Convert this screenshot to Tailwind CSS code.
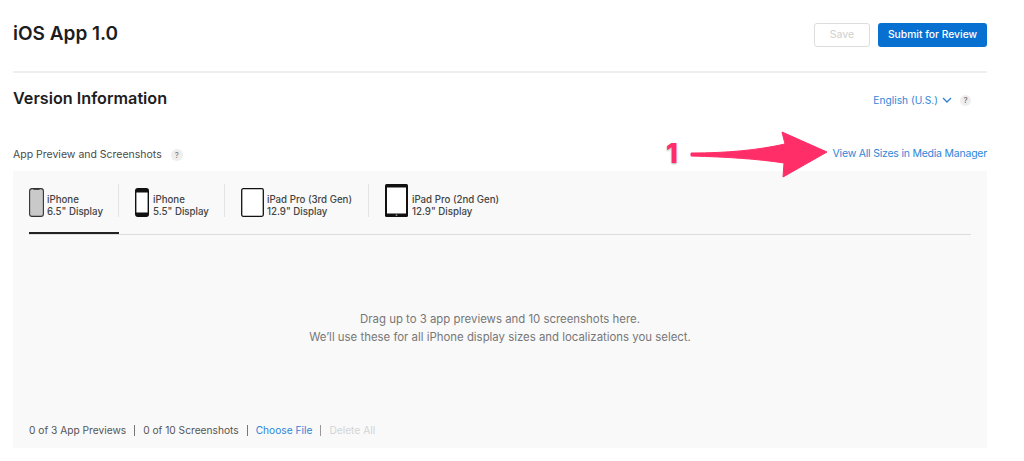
<!DOCTYPE html>
<html><head><meta charset="utf-8"><script src="https://cdn.jsdelivr.net/npm/@tailwindcss/browser@4"></script></head>
<body class="bg-white overflow-hidden font-['Inter','Liberation_Sans',sans-serif] text-[#333]">
<div class="relative w-[1024px] h-[461px] overflow-hidden pl-[13px] pr-[37px]">
  <header class="h-[73px] border-b-2 border-[#eeeeee] flex justify-between items-start">
    <h1 class="mt-[21px] text-[19px] leading-[26px] font-semibold text-[#1d1d1f]">iOS App 1.0</h1>
    <div class="mt-[23px] flex gap-2">
      <button class="w-[56px] h-[24px] rounded-[3px] border border-[#dddddd] text-[10.5px] text-[#cfcfcf] bg-white">Save</button>
      <button class="w-[109px] h-[24px] rounded-[3px] bg-[#0870d1] text-[10.3px] font-medium text-white">Submit for Review</button>
    </div>
  </header>
  <section class="h-[56px] flex justify-between items-start">
    <h2 class="mt-[15px] text-[16.2px] leading-[20px] font-semibold text-[#1d1d1f]">Version Information</h2>
    <div class="mt-[19px] mr-[16px] flex items-center text-[10.2px] leading-[14px] text-[#2f86d8]">
      <span class="mt-[1px]">English (U.S.)</span>
      <svg class="ml-[4px] mt-[1px]" width="10" height="7" viewBox="0 0 10 7" fill="none" stroke="#2f7fd0" stroke-width="1.3"><path d="M1 1l4 4 4-4"/></svg>
      <span class="ml-[8px] w-[11px] h-[11px] mt-[1px] rounded-full bg-[#eeeeee] text-[#777] text-[8px] leading-[11px] text-center font-medium">?</span>
    </div>
  </section>
  <div class="h-[42px] flex justify-between items-start">
    <div class="mt-[19px] flex items-center text-[10.5px] leading-[14px] text-[#4a4a4a]">
      <span>App Preview and Screenshots</span>
      <span class="ml-[9px] w-[12px] h-[12px] rounded-full bg-[#eeeeee] text-[#777] text-[8px] leading-[12px] text-center">?</span>
    </div>
    <a class="mt-[18px] text-[10.5px] tracking-[-0.22px] leading-[14px] text-[#2f86d8]">View All Sizes in Media Manager</a>
  </div>
  <main class="h-[277px] bg-[#f9f9f9] px-[16px] flex flex-col">
    <nav class="h-[64px] border-b border-[#dddddd] flex items-start shrink-0">
      <div class="w-[90px] h-[63px] -mr-px border-b-2 border-[#222] flex items-start pt-[17px] shrink-0">
        <svg width="15" height="29" viewBox="0 0 15 29"><rect x="0.6" y="0.6" width="13.8" height="27.8" rx="2.5" fill="#c9c9c9" stroke="#333" stroke-width="1.1"/><rect x="4.5" y="0.5" width="6" height="1.3" fill="#333"/></svg>
        <p class="ml-[3px] mt-[6px] text-[9.7px] leading-[11.5px] text-[#444] font-medium whitespace-nowrap">iPhone<br>6.5" Display</p>
      </div>
      <div class="w-[106px] h-[33px] mt-[13px] border-l border-[#e4e4e4] flex items-start pl-[16px] pt-[4px] shrink-0">
        <svg width="14" height="29" viewBox="0 0 14 29"><rect x="0.7" y="0.7" width="12.6" height="27.6" rx="2" fill="#fff" stroke="#111" stroke-width="1.4"/><rect x="1" y="1" width="12" height="3.5" fill="#111"/><rect x="1" y="24.5" width="12" height="3.5" fill="#111"/></svg>
        <p class="ml-[4px] mt-[6px] text-[9.7px] leading-[11.5px] text-[#444] font-medium whitespace-nowrap">iPhone<br>5.5" Display</p>
      </div>
      <div class="w-[144px] h-[33px] mt-[13px] border-l border-[#e4e4e4] flex items-start pl-[16px] pt-[4px] shrink-0">
        <svg width="23" height="29" viewBox="0 0 23 29"><rect x="0.7" y="0.7" width="21.6" height="27.6" rx="1.5" fill="#fff" stroke="#111" stroke-width="1.3"/></svg>
        <p class="ml-[3px] mt-[6px] text-[9.7px] leading-[11.5px] text-[#444] font-medium whitespace-nowrap">iPad Pro (3rd Gen)<br>12.9" Display</p>
      </div>
      <div class="h-[33px] mt-[13px] border-l border-[#e4e4e4] flex items-start pl-[16px] shrink-0">
        <svg width="23" height="33" viewBox="0 0 23 33"><rect x="0" y="0" width="23" height="33" rx="1.5" fill="#111"/><rect x="2" y="3.5" width="19" height="26" fill="#fff"/><circle cx="11.5" cy="31.2" r="0.9" fill="#888"/></svg>
        <p class="ml-[4px] mt-[10px] text-[9.7px] leading-[11.5px] text-[#444] font-medium whitespace-nowrap">iPad Pro (2nd Gen)<br>12.9" Display</p>
      </div>
    </nav>
    <div class="flex-1 flex flex-col items-center pt-[75px] text-[11.4px] leading-[18px] text-[#777777]">
      <p>Drag up to 3 app previews and 10 screenshots here.</p>
      <p>We’ll use these for all iPhone display sizes and localizations you select.</p>
    </div>
    <footer class="h-[25px] flex items-start text-[10.2px] leading-[14px] text-[#555] shrink-0">
      <span>0 of 3 App Previews</span>
      <span class="mx-[8px] w-px h-[11px] mt-[2px] bg-[#777]"></span>
      <span>0 of 10 Screenshots</span>
      <span class="mx-[8px] w-px h-[11px] mt-[2px] bg-[#777]"></span>
      <span class="text-[#2f86d8]">Choose File</span>
      <span class="mx-[8px] w-px h-[11px] mt-[2px] bg-[#999]"></span>
      <span class="text-[#d4d4d4]">Delete All</span>
    </footer>
  </main>
  <svg class="absolute left-[688px] top-[128px]" width="142" height="52" viewBox="0 0 142 52"><path d="M3 25 C40 25 70 22 97 16 L94 4 L139 24 L95 49 L96 35 C70 31 40 29 3 28 Z" fill="#ff2d68" stroke="#ff2d68" stroke-width="1" stroke-linejoin="round"/></svg>
  <span class="absolute left-[666px] top-[140px] text-[27px] leading-[28px] font-extrabold text-[#ff2d68] [-webkit-text-stroke:2px_#ffffff] [paint-order:stroke_fill] [text-shadow:0_1px_2px_#aaa]">1</span>
</div>
</body></html>
